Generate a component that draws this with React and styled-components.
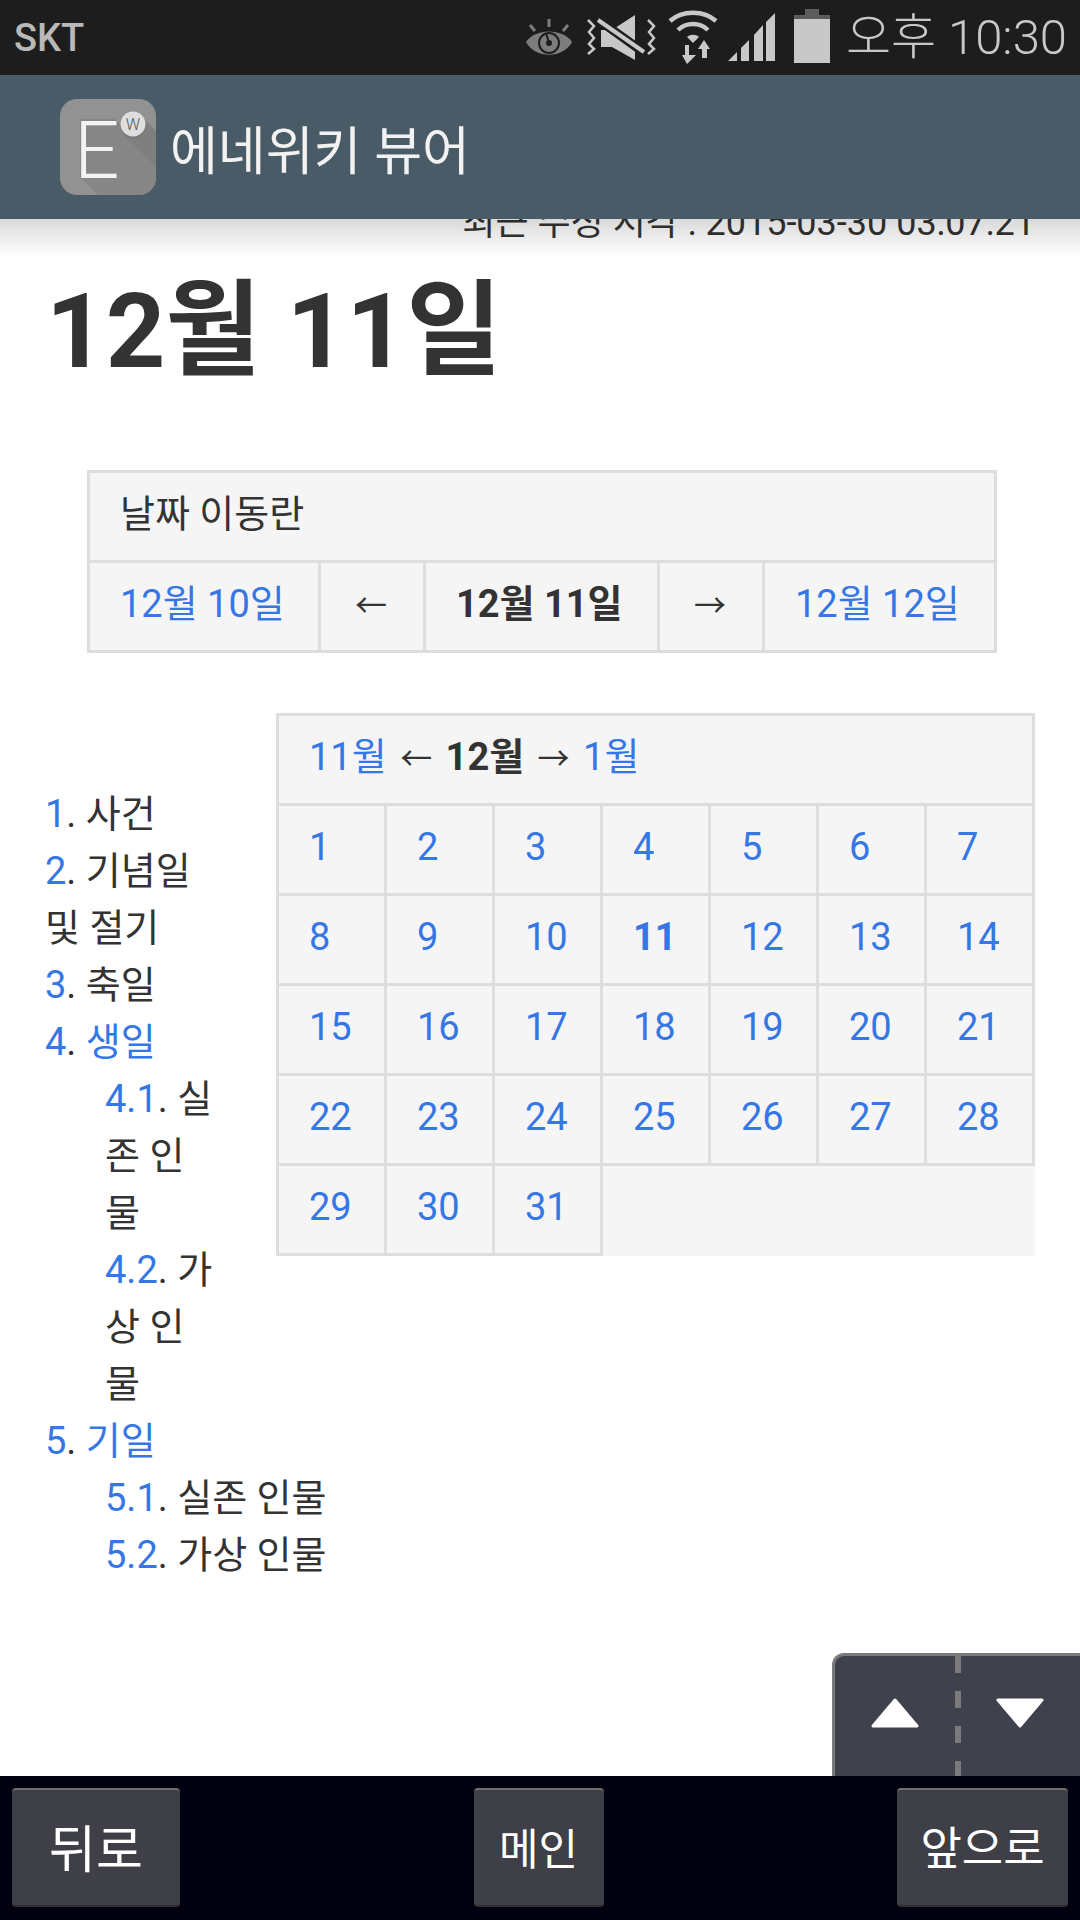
import styled, { createGlobalStyle } from 'styled-components';

const GlobalStyle = createGlobalStyle`
  html, body { margin: 0; padding: 0; background: #fff; }
  body { font-family: Roboto, "Noto Sans CJK KR", sans-serif; color: #333; }
`;

const Screen = styled.div`
  display: flex;
  flex-direction: column;
  width: 1080px;
  height: 1920px;
  overflow: hidden;
`;

const StatusBar = styled.div`
  display: flex;
  align-items: center;
  justify-content: space-between;
  height: 75px;
  padding: 0 13px 0 14px;
  box-sizing: border-box;
  background: #1d1d1d;
  color: #c8c8c8;
  flex: none;
`;

const Carrier = styled.span`
  font-size: 38px;
  font-weight: 500;
  color: #b9b9b9;
`;

const StatusIcons = styled.div`
  display: flex;
  align-items: flex-start;
  height: 75px;
`;

const StatusIcon = styled.svg`
  display: block;
  flex: none;
  margin-top: ${p => p.$top}px;
  margin-left: ${p => p.$left}px;
`;

const Clock = styled.span`
  margin-left: 16px;
  font-size: 49px;
  font-weight: 300;
  line-height: 75px;
`;

const AppBar = styled.header`
  position: relative;
  z-index: 2;
  display: flex;
  align-items: center;
  gap: 14px;
  height: 144px;
  padding-left: 60px;
  box-sizing: border-box;
  background: #485b67;
  flex: none;
  &::after {
    content: '';
    position: absolute;
    left: 0;
    right: 0;
    top: 100%;
    height: 38px;
    background: linear-gradient(rgba(0, 0, 0, 0.15), rgba(0, 0, 0, 0));
  }
`;

const AppTitle = styled.h2`
  margin: 0;
  font-size: 52px;
  font-weight: 400;
  color: #f2f2f2;
`;

const Main = styled.main`
  position: relative;
  flex: 1;
  min-height: 0;
`;

const Meta = styled.div`
  margin-top: -24px;
  padding-right: 45px;
  text-align: right;
  font-size: 36px;
  line-height: 57px;
`;

const Title = styled.h1`
  margin: 15px 0 0 46px;
  font-size: 104px;
  font-weight: 700;
  line-height: 130px;
`;

const NavTable = styled.table`
  table-layout: fixed;
  border-collapse: collapse;
  width: 907px;
  margin: 73px 0 0 87px;
  background: #f5f5f5;
  font-size: 38px;
  line-height: 57px;
`;

const NavCol = styled.col`
  width: ${p => p.$w}px;
`;

const Cell = styled.td`
  padding: 13px 30px 17px;
  border: 3px solid #ddd;
  font-weight: ${p => (p.$bold ? 700 : 400)};
  white-space: nowrap;
`;

const Link = styled.a`
  color: #3677e6;
`;

const Arrow = styled.span`
  margin: 0 4px;
  font-size: 32px;
  line-height: 1;
`;

const Section = styled.section`
  display: flow-root;
  margin-top: 60px;
`;

const Calendar = styled.table`
  float: right;
  table-layout: fixed;
  border-collapse: collapse;
  width: 759px;
  margin: 0 45px 60px 63px;
  background: #f5f5f5;
  font-size: 38px;
  line-height: 57px;
`;

const BlankCell = styled.td``;

const Toc = styled.ul`
  margin: 0;
  padding: 73px 0 0 45px;
  list-style: none;
  font-size: 38px;
  line-height: 57px;
  word-break: break-all;
`;

const SubToc = styled.ul`
  margin: 0;
  padding: 0 0 0 60px;
  list-style: none;
`;

const ScrollPad = styled.div`
  position: absolute;
  right: 0;
  bottom: 0;
  display: flex;
  width: 248px;
  height: 123px;
  box-sizing: border-box;
  border: 3px solid #7a7a7a;
  border-width: 3px 0 0 3px;
  border-top-left-radius: 12px;
  background: #3f424d;
`;

const ScrollButton = styled.div`
  display: flex;
  flex: 1;
  justify-content: center;
  padding-top: 42px;
`;

const ScrollDivider = styled.div`
  width: 6px;
  flex: none;
  background: repeating-linear-gradient(#7a7a7a 0 17px, transparent 17px 35px);
`;

const BottomBar = styled.footer`
  display: flex;
  justify-content: space-between;
  height: 144px;
  padding: 12px 12px 13px;
  box-sizing: border-box;
  background: #00000e;
  flex: none;
`;

const BarButton = styled.button`
  width: ${p => p.$w}px;
  padding: 0 0 4px;
  border: 0;
  border-top: 2px solid #6e6e6e;
  border-bottom: 2px solid #2e2e33;
  border-radius: 4px;
  background: #3f3f47;
  color: #fff;
  font-family: inherit;
  font-size: ${p => p.$size}px;
`;

const LogoFrame = styled.svg`
  display: block;
  flex: none;
`;

const navRow = [
  { label: '12월 10일', link: true },
  { label: '←', arrow: true },
  { label: '12월 11일', bold: true },
  { label: '→', arrow: true },
  { label: '12월 12일', link: true },
];

const weeks = [
  [1, 2, 3, 4, 5, 6, 7],
  [8, 9, 10, 11, 12, 13, 14],
  [15, 16, 17, 18, 19, 20, 21],
  [22, 23, 24, 25, 26, 27, 28],
  [29, 30, 31],
];

const Logo = () => (
  <LogoFrame width="96" height="96" viewBox="0 0 96 96">
    <rect width="96" height="96" rx="17" fill="#929292" />
    <path d="M55 20 L96 61 V79 A17 17 0 0 1 79 96 H38 L20 78 V20 Z" fill="#868686" />
    <path d="M64 36 L82 18 L96 32 V68 Z" fill="#7f7f7f" />
    <text x="14" y="79" fontFamily="Roboto" fontSize="80" fontWeight="300" fill="#f3f3f3">E</text>
    <circle cx="73" cy="26" r="13" fill="#6f6f6f" opacity="0.5" />
    <circle cx="73" cy="25" r="12.5" fill="#dedede" />
    <text x="73" y="31" textAnchor="middle" fontFamily="Roboto" fontSize="16" fontWeight="300" fill="#555">W</text>
  </LogoFrame>
);

const EyeIcon = () => (
  <StatusIcon $top={18} $left={0} width="46" height="38" viewBox="0 0 46 38">
    <g stroke="#7d7d7d" strokeWidth="3" fill="none">
      <path d="M23 1 V9 M4 7 L9 13 M42 7 L37 13" />
    </g>
    <path d="M0 24 C9 10 37 10 46 24 C37 41 9 41 0 24 Z" fill="#7d7d7d" />
    <circle cx="23" cy="25" r="10" fill="none" stroke="#1d1d1d" strokeWidth="2" />
    <circle cx="23" cy="25" r="3" fill="#1d1d1d" />
    <path d="M23 25 L20 15" stroke="#1d1d1d" strokeWidth="2" />
  </StatusIcon>
);

const MuteIcon = () => (
  <StatusIcon $top={15} $left={14} width="70" height="46" viewBox="0 0 70 46">
    <path d="M15 15 H26 L49 0 V45 L26 32 H15 Z" fill="#c8c8c8" />
    <path d="M10 3 L60 39" stroke="#1d1d1d" strokeWidth="9" />
    <path d="M12 5 L58 37" stroke="#c8c8c8" strokeWidth="4" />
    <g stroke="#c8c8c8" strokeWidth="2.5" fill="none">
      <polyline points="2,5 8,11 3,17 8,23 3,29 8,34 2,39" />
      <polyline points="62,5 68,11 63,17 68,23 63,29 68,34 62,39" />
    </g>
  </StatusIcon>
);

const WifiIcon = () => (
  <StatusIcon $top={10} $left={12} width="50" height="54" viewBox="0 0 50 54">
    <g stroke="#c8c8c8" strokeWidth="4.5" fill="none">
      <path d="M2 11 C14 0 36 0 48 11" />
      <path d="M10 20 C18 12 32 12 40 20" />
    </g>
    <path d="M19 27 C22 24 28 24 31 27 L25 33 Z" fill="#c8c8c8" />
    <path d="M17 35 H21 V45 H28 L19 54 L14 45 H17 Z" fill="#c8c8c8" />
    <path d="M36 30 L42 39 H39 V48 H34 V39 H30 Z" fill="#c8c8c8" />
  </StatusIcon>
);

const SignalIcon = () => (
  <StatusIcon $top={13} $left={10} width="48" height="48" viewBox="0 0 48 48">
    <path d="M0 48 L9 39 V48 Z M13 35 L21 27 V48 H13 Z M26 22 L35 12 V48 H26 Z M38 9 L47 0 V48 H38 Z" fill="#c8c8c8" />
  </StatusIcon>
);

const BatteryIcon = () => (
  <StatusIcon $top={9} $left={18} width="36" height="54" viewBox="0 0 36 54">
    <path d="M11 0 H25 V6 H36 V10 H0 V6 H11 Z" fill="#5c5c5c" />
    <rect y="10" width="36" height="44" fill="#c8c8c8" />
  </StatusIcon>
);

const Triangle = ({ down }) => (
  <svg width="48" height="30" viewBox="0 0 48 30" style={{ display: 'block' }}>
    <path
      d={down ? 'M2 2 H46 L24 28 Z' : 'M24 2 L46 28 H2 Z'}
      fill="#fff"
      stroke="#fff"
      strokeWidth="3"
      strokeLinejoin="round"
    />
  </svg>
);

const navContent = item => {
  if (item.link) return <Link>{item.label}</Link>;
  if (item.arrow) return <Arrow>{item.label}</Arrow>;
  return item.label;
};

const App = () => (
  <Screen>
    <GlobalStyle />
    <StatusBar>
      <Carrier>SKT</Carrier>
      <StatusIcons>
        <EyeIcon />
        <MuteIcon />
        <WifiIcon />
        <SignalIcon />
        <BatteryIcon />
        <Clock>오후 10:30</Clock>
      </StatusIcons>
    </StatusBar>
    <AppBar>
      <Logo />
      <AppTitle>에네위키 뷰어</AppTitle>
    </AppBar>
    <Main>
      <Meta>최근 수정 시각 : 2015-03-30 03:07:21</Meta>
      <Title>12월 11일</Title>
      <NavTable>
        <colgroup>
          <NavCol $w={231} />
          <NavCol $w={105} />
          <NavCol $w={234} />
          <NavCol $w={105} />
          <NavCol $w={232} />
        </colgroup>
        <tbody>
          <tr>
            <Cell colSpan={5}>날짜 이동란</Cell>
          </tr>
          <tr>
            {navRow.map(item => (
              <Cell key={item.label} $bold={item.bold}>
                {navContent(item)}
              </Cell>
            ))}
          </tr>
        </tbody>
      </NavTable>
      <Section>
        <Calendar>
          <tbody>
            <tr>
              <Cell colSpan={7}>
                <Link>11월</Link> <Arrow>←</Arrow> <b>12월</b> <Arrow>→</Arrow> <Link>1월</Link>
              </Cell>
            </tr>
            {weeks.map(week => (
              <tr key={week[0]}>
                {week.map(day => (
                  <Cell key={day} $bold={day === 11}>
                    <Link>{day}</Link>
                  </Cell>
                ))}
                {week.length < 7 && <BlankCell colSpan={7 - week.length} />}
              </tr>
            ))}
          </tbody>
        </Calendar>
        <Toc>
          <li><Link>1</Link>. 사건</li>
          <li><Link>2</Link>. 기념일 및 절기</li>
          <li><Link>3</Link>. 축일</li>
          <li>
            <Link>4</Link>. <Link>생일</Link>
            <SubToc>
              <li><Link>4.1</Link>. 실존 인물</li>
              <li><Link>4.2</Link>. 가상 인물</li>
            </SubToc>
          </li>
          <li>
            <Link>5</Link>. <Link>기일</Link>
            <SubToc>
              <li><Link>5.1</Link>. 실존 인물</li>
              <li><Link>5.2</Link>. 가상 인물</li>
            </SubToc>
          </li>
        </Toc>
      </Section>
      <ScrollPad>
        <ScrollButton><Triangle /></ScrollButton>
        <ScrollDivider />
        <ScrollButton><Triangle down /></ScrollButton>
      </ScrollPad>
    </Main>
    <BottomBar>
      <BarButton $w={168} $size={51}>뒤로</BarButton>
      <BarButton $w={130} $size={43}>메인</BarButton>
      <BarButton $w={171} $size={45}>앞으로</BarButton>
    </BottomBar>
  </Screen>
);

export default App;
